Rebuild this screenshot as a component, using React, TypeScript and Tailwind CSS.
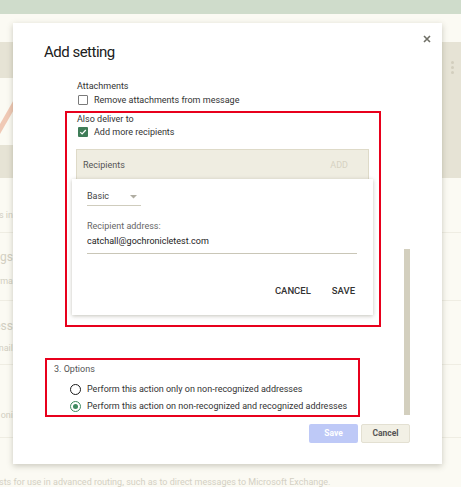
import React from "react";

function Checkbox({ checked }: { checked?: boolean }) {
  if (checked) {
    return (
      <span className="flex h-[10px] w-[10px] shrink-0 items-center justify-center rounded-[1px] bg-[#3f7d58]">
        <svg width="8" height="8" viewBox="0 0 8 8">
          <path d="M1.3 4.2 L3.1 6 L6.8 2" stroke="#fff" strokeWidth="1.2" fill="none" />
        </svg>
      </span>
    );
  }
  return <span className="h-[10px] w-[10px] shrink-0 rounded-[1px] border border-[#7a7a7a] bg-white" />;
}

function Radio({ checked }: { checked?: boolean }) {
  if (checked) {
    return (
      <span className="flex h-[11px] w-[11px] shrink-0 items-center justify-center rounded-full border-[1.5px] border-[#3f8a60]">
        <span className="h-[5px] w-[5px] rounded-full bg-[#3f8a60]" />
      </span>
    );
  }
  return <span className="h-[11px] w-[11px] shrink-0 rounded-full border-[1.5px] border-[#1a1a1a]" />;
}

export default function App() {
  return (
    <div className="relative h-[487px] w-[461px] overflow-hidden bg-[#fbfaf3] font-['Roboto','Liberation_Sans',sans-serif]">
      {/* background page */}
      <div className="h-[14px] bg-[#cfdccb]" />
      <div className="h-[28px]" />
      <div className="flex h-[136px]">
        <div className="flex w-[20px] flex-col">
          <div className="h-[36px] bg-[#e6e3d5]" />
          <div className="h-[67px]">
            <svg width="20" height="67" viewBox="0 0 20 67">
              <path d="M-4 58 L20 16" stroke="#f0c9b5" strokeWidth="5" fill="none" />
            </svg>
          </div>
          <div className="h-[33px] bg-[#e6e3d5]" />
        </div>
        <div className="flex-1" />
        <div className="flex w-[25px] justify-end bg-[#e6e3d5] pr-[7px] pt-[19px]">
          <div className="flex flex-col gap-[2px]">
            <span className="h-[3px] w-[3px] rounded-full bg-[#d2cebe]" />
            <span className="h-[3px] w-[3px] rounded-full bg-[#d2cebe]" />
            <span className="h-[3px] w-[3px] rounded-full bg-[#d2cebe]" />
          </div>
        </div>
      </div>
      <div className="h-[55px] border-b border-[#efede3] text-[#d2cfc2]">
        <div className="flex w-[13px] justify-end whitespace-nowrap pt-[32px] text-[9px] leading-[11px]">s in</div>
      </div>
      <div className="h-[68px] border-b border-[#efede3] text-[#d2cfc2]">
        <div className="flex w-[13px] flex-col items-end whitespace-nowrap pt-[17px]">
          <div className="text-[12px] leading-[14px]">gs</div>
          <div className="mt-[12px] text-[9px] leading-[11px]">rma</div>
        </div>
      </div>
      <div className="h-[64px] border-b border-[#efede3] text-[#d2cfc2]">
        <div className="flex w-[13px] flex-col items-end whitespace-nowrap pt-[18px]">
          <div className="text-[12px] leading-[14px]">ess</div>
          <div className="mt-[10px] text-[9px] leading-[11px]">nail</div>
        </div>
      </div>
      <div className="h-[73px] border-b border-[#efede3] text-[#d2cfc2]">
        <div className="flex w-[13px] justify-end whitespace-nowrap pt-[45px] text-[9px] leading-[11px]">oni</div>
      </div>
      <div className="mt-[39px] ml-[-1px] whitespace-nowrap text-[9px] leading-[11px] text-[#d3d0c3]">
        sts for use in advanced routing, such as to direct messages to Microsoft Exchange.
      </div>

      {/* modal */}
      <div className="absolute left-[13px] top-[23px] h-[441px] w-[429px] bg-white shadow-[0_2px_6px_rgba(60,55,30,0.25)]">
        <button className="absolute left-[409px] top-[11px] flex h-[9px] w-[9px] items-center justify-center">
          <svg width="8" height="8" viewBox="0 0 8 8">
            <path d="M1 1 L7 7 M7 1 L1 7" stroke="#6f6f66" strokeWidth="1.6" />
          </svg>
        </button>

        <div className="pl-[31px] pt-[19px] text-[15px] leading-[20px] tracking-[-0.5px] text-[#202020]">Add setting</div>

        <div className="pl-[64px] pt-[18px] text-[9px] leading-[12px] text-[#333]">
          <div className="h-[13px]">Attachments</div>
          <div className="flex h-[13px] items-center gap-[6px] pl-[1px]">
            <Checkbox />
            <span>Remove attachments from message</span>
          </div>
        </div>

        {/* red box 1 */}
        <div className="ml-[52px] mt-[5px] h-[216px] w-[316px] border-2 border-[#e8001c] text-[9px] leading-[12px]">
          <div className="pl-[10px] pt-[1px] text-[#333]">
            <div className="h-[11px] leading-[11px]">Also deliver to</div>
            <div className="flex h-[14px] items-center gap-[6px] pl-[1px]">
              <Checkbox checked />
              <span>Add more recipients</span>
            </div>
          </div>
          <div className="ml-[9px] mt-[10px] flex h-[30px] w-[293px] items-center justify-between border border-b-0 border-[#dedac8] bg-[#efede1] pl-[6px] pr-[20px]">
            <span className="text-[#555]">Recipients</span>
            <span className="text-[#d6d2c2]">ADD</span>
          </div>
          <div className="ml-[5px] h-[136px] w-[301px] bg-white pl-[15px] pt-[11px] shadow-[0_1px_4px_rgba(60,55,30,0.3)]">
            <div className="flex h-[16px] w-[54px] items-start justify-between border-b border-[#cfccbd] pr-[4px] text-[#444]">
              <span>Basic</span>
              <svg width="7" height="8" viewBox="0 0 7 8" className="mt-[3px]">
                <path d="M0 2 L7 2 L3.5 5.5 Z" fill="#b0ada2" />
              </svg>
            </div>
            <div className="mt-[14px] h-[12px] text-[#666]">Recipient address:</div>
            <div className="mt-[3px] h-[19px] w-[270px] border-b border-[#c9c6b7] text-[#222]">
              catchall@gochronicletest.com
            </div>
            <div className="mt-[31px] flex justify-end gap-[21px] pr-[18px] text-[9.5px] font-medium leading-[12px] text-[#333]">
              <span>CANCEL</span>
              <span>SAVE</span>
            </div>
          </div>
        </div>

        {/* red box 2 */}
        <div className="ml-[32px] mt-[31px] h-[59px] w-[315px] border-2 border-[#e8001c] text-[9px] leading-[12px]">
          <div className="pl-[7px] pt-[3px] text-[#555]">3. Options</div>
          <div className="mt-[8px] flex flex-col gap-[5px] pl-[23px] text-[#333]">
            <div className="flex h-[12px] items-center gap-[6px]">
              <Radio />
              <span>Perform this action only on non-recognized addresses</span>
            </div>
            <div className="flex h-[12px] items-center gap-[6px]">
              <Radio checked />
              <span>Perform this action on non-recognized and recognized addresses</span>
            </div>
          </div>
        </div>

        {/* scrollbar thumb */}
        <div className="absolute left-[391px] top-[226px] h-[166px] w-[6px] bg-[#d3cfbe]" />

        <div className="absolute left-[296px] top-[401px] flex gap-[3px] text-[8.5px] font-bold">
          <button className="h-[19px] w-[49px] rounded-[2px] bg-[#bec9f7] text-white">Save</button>
          <button className="h-[19px] w-[49px] rounded-[2px] border border-[#e3e0d2] bg-[#f2f0e5] text-[#555]">Cancel</button>
        </div>
      </div>
    </div>
  );
}
